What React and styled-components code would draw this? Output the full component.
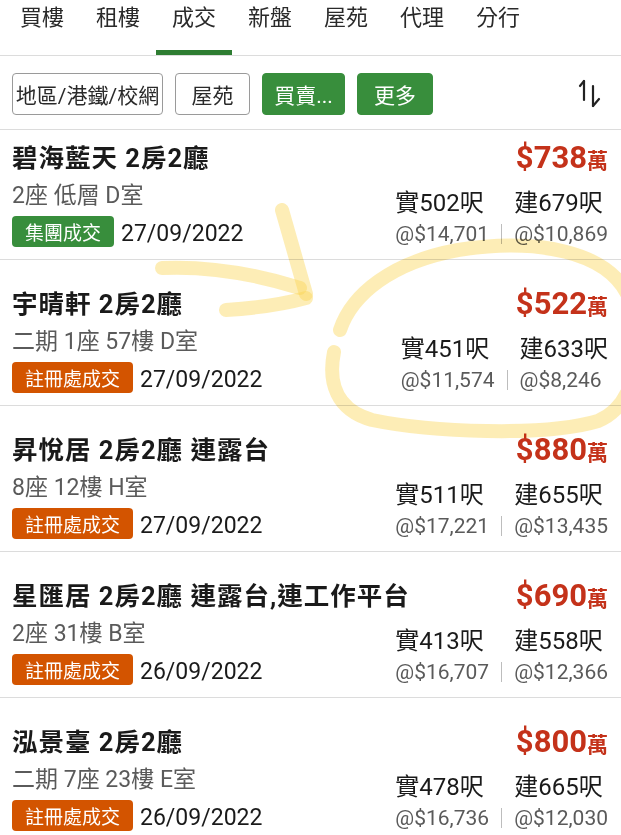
import React from 'react';
import styled, { createGlobalStyle } from 'styled-components';

const GlobalStyle = createGlobalStyle`
  html, body {
    margin: 0;
    padding: 0;
    background: #fff;
    overflow: hidden;
  }
  body {
    font-family: Roboto, "Noto Sans CJK TC", sans-serif;
    color: #1b1b1b;
  }
`;

const TABS = ['買樓', '租樓', '成交', '新盤', '屋苑', '代理', '分行'];

const ROWS = [
  {
    name: '碧海藍天', extra: '', addr: '2座 低層 D室', badge: '集團成交', group: true,
    date: '27/09/2022', price: '738', net: '502', gross: '679', netPrice: '14,701', grossPrice: '10,869',
  },
  {
    name: '宇晴軒', extra: '', addr: '二期 1座 57樓 D室', badge: '註冊處成交',
    date: '27/09/2022', price: '522', net: '451', gross: '633', netPrice: '11,574', grossPrice: '8,246',
  },
  {
    name: '昇悅居', extra: '連露台', addr: '8座 12樓 H室', badge: '註冊處成交',
    date: '27/09/2022', price: '880', net: '511', gross: '655', netPrice: '17,221', grossPrice: '13,435',
  },
  {
    name: '星匯居', extra: '連露台,連工作平台', addr: '2座 31樓 B室', badge: '註冊處成交',
    date: '26/09/2022', price: '690', net: '413', gross: '558', netPrice: '16,707', grossPrice: '12,366',
  },
  {
    name: '泓景臺', extra: '', addr: '二期 7座 23樓 E室', badge: '註冊處成交',
    date: '26/09/2022', price: '800', net: '478', gross: '665', netPrice: '16,736', grossPrice: '12,030',
  },
];

const SortIcon = () => (
  <svg width="26" height="30" viewBox="0 0 26 30" fill="none" stroke="#222" strokeWidth="2.2" strokeLinecap="round" strokeLinejoin="round">
    <path d="M7 2 V21" />
    <path d="M7 2 L3 7" />
    <path d="M16 7 V27" />
    <path d="M16 27 L22 20" />
  </svg>
);

// yellow highlighter scribble drawn over the list
const Highlighter = () => (
  <Marks viewBox="0 0 621 835" width="621" height="835">
    <g fill="none" stroke="rgba(250, 212, 80, 0.42)" strokeWidth="14" strokeLinecap="round" strokeLinejoin="round">
      <path d="M162 268 C 205 266, 255 274, 300 288" />
      <path d="M226 310 C 258 308, 284 304, 306 298" />
      <path d="M282 210 C 290 238, 298 266, 306 294" />
      <path d="M340 330 C 352 294, 392 262, 458 250 C 535 238, 610 250, 630 300 C 645 350, 636 405, 598 421 C 545 437, 430 432, 372 420 C 336 410, 328 382, 334 352" />
    </g>
  </Marks>
);

export default function App() {
  return (
    <Page>
      <GlobalStyle />
      <TabBar>
        {TABS.map((t) => (
          <Tab key={t} $active={t === '成交'}>{t}</Tab>
        ))}
      </TabBar>
      <FilterBar>
        <FilterButton $w={151}>地區/港鐵/校網</FilterButton>
        <FilterButton $w={75}>屋苑</FilterButton>
        <FilterButton $w={83} $on>買賣...</FilterButton>
        <FilterButton $w={76} $on>更多</FilterButton>
        <SortButton><SortIcon /></SortButton>
      </FilterBar>
      <List>
        {ROWS.map((r, i) => (
          <Row key={r.name} $first={i === 0}>
            <Info>
              <Title>
                {r.name} 2房2廳{r.extra ? ` ${r.extra}` : ''}
              </Title>
              <Address>{r.addr}</Address>
              <Meta>
                <Badge $group={r.group}>{r.badge}</Badge>
                <DateText>{r.date}</DateText>
              </Meta>
            </Info>
            <Figures>
              <Price>
                ${r.price}<Unit>萬</Unit>
              </Price>
              <AreaGrid>
                <Area>實{r.net}呎</Area>
                <span />
                <Area>建{r.gross}呎</Area>
                <PerFoot>@${r.netPrice}</PerFoot>
                <Divider />
                <PerFoot>@${r.grossPrice}</PerFoot>
              </AreaGrid>
            </Figures>
          </Row>
        ))}
      </List>
      <Highlighter />
    </Page>
  );
}

const Page = styled.div`
  position: relative;
  width: 621px;
  height: 835px;
  overflow: hidden;
  background: #fff;
`;

const TabBar = styled.nav`
  display: flex;
  padding-left: 4px;
  border-bottom: 1px solid #dcdcdc;
  white-space: nowrap;
`;

const Tab = styled.div`
  box-sizing: border-box;
  height: 55px;
  padding: 4px 16px 0;
  width: 76px;
  flex-shrink: 0;
  text-align: center;
  font-size: 22px;
  line-height: 28px;
  color: #2a2a2a;
  border-bottom: 5px solid ${(p) => (p.$active ? '#2e7d32' : 'transparent')};
`;

const FilterBar = styled.div`
  display: flex;
  align-items: center;
  gap: 12px;
  padding: 17px 0 14px 12px;
  border-bottom: 1px solid #dcdcdc;
`;

const FilterButton = styled.div`
  box-sizing: border-box;
  width: ${(p) => p.$w}px;
  height: 42px;
  display: flex;
  align-items: center;
  justify-content: center;
  border-radius: 4px;
  font-size: 21px;
  white-space: nowrap;
  border: 1px solid ${(p) => (p.$on ? '#388e3c' : '#9a9a9a')};
  background: ${(p) => (p.$on ? '#388e3c' : '#fff')};
  color: ${(p) => (p.$on ? '#fff' : '#2a2a2a')};
`;

const SortButton = styled.div`
  display: flex;
  margin-left: auto;
  margin-right: 18px;
`;

const List = styled.div`
  display: flex;
  flex-direction: column;
`;

const Row = styled.div`
  display: flex;
  justify-content: space-between;
  padding: ${(p) => (p.$first ? '13px' : '29px')} 13px 11px 12px;
  border-bottom: 1px solid #dcdcdc;
`;

const Info = styled.div`
  display: flex;
  flex-direction: column;
  min-width: 0;
`;

const Title = styled.div`
  height: 30px;
  font-size: 25.5px;
  line-height: 30px;
  font-weight: 700;
  letter-spacing: 1px;
  color: #1a1a1a;
  white-space: nowrap;
`;

const Address = styled.div`
  height: 30px;
  margin-top: 8px;
  font-size: 23px;
  line-height: 30px;
  color: #5a5a5a;
  white-space: nowrap;
`;

const Meta = styled.div`
  height: 31px;
  margin-top: 5px;
  display: flex;
  align-items: center;
  gap: 7px;
`;

const Badge = styled.span`
  box-sizing: border-box;
  height: 31px;
  padding: 0 13px;
  display: flex;
  align-items: center;
  border-radius: 4px;
  font-size: 19px;
  color: #fff;
  background: ${(p) => (p.$group ? '#388e3c' : '#d35400')};
`;

const DateText = styled.span`
  height: 30px;
  margin-top: 4px;
  font-size: 23px;
  line-height: 30px;
  color: #1a1a1a;
`;

const Figures = styled.div`
  display: flex;
  flex-direction: column;
  align-items: flex-end;
`;

const Price = styled.div`
  height: 30px;
  font-size: 31px;
  line-height: 30px;
  font-weight: 700;
  color: #c4321a;
  white-space: nowrap;
`;

const Unit = styled.span`
  font-size: 21px;
`;

const AreaGrid = styled.div`
  margin-top: 16px;
  display: grid;
  grid-template-columns: auto 1px auto;
  grid-auto-rows: 28px;
  column-gap: 12px;
  row-gap: 3px;
`;

const Area = styled.span`
  font-size: 24px;
  line-height: 28px;
  color: #1a1a1a;
  white-space: nowrap;
`;

const PerFoot = styled.span`
  font-size: 21px;
  line-height: 28px;
  color: #5a5a5a;
  white-space: nowrap;
`;

const Divider = styled.span`
  align-self: center;
  width: 1px;
  height: 20px;
  background: #bdbdbd;
`;

const Marks = styled.svg`
  position: absolute;
  inset: 0;
  pointer-events: none;
  mix-blend-mode: multiply;
`;
